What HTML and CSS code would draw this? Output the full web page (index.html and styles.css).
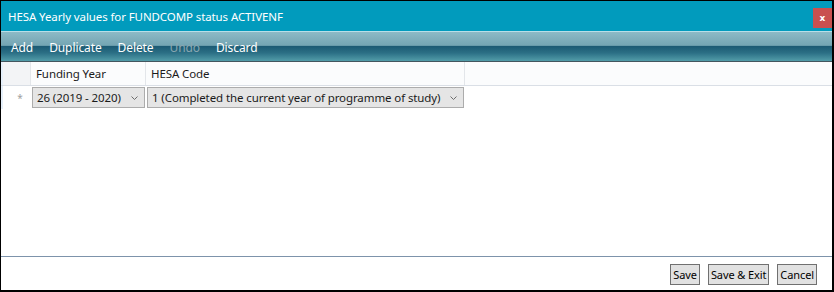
FILE: index.html
```html
<!DOCTYPE html>
<html lang="en">

<head>
    <meta charset="UTF-8">
    <meta name="viewport" content="width=device-width, initial-scale=1.0">
    <title>HESA Yearly values</title>
    <link rel="stylesheet" href="styles.css">
</head>

<body>
<div class="window">
    <header class="titlebar">
        <span class="title">HESA Yearly values for FUNDCOMP status ACTIVENF</span>
        <button class="close">x</button>
    </header>

    <nav class="toolbar">
        <a href="#">Add</a>
        <a href="#">Duplicate</a>
        <a href="#">Delete</a>
        <a href="#" class="disabled">Undo</a>
        <a href="#">Discard</a>
    </nav>

    <div class="grid">
        <div class="grid-row grid-head">
            <div class="cell indicator"></div>
            <div class="cell col-year">Funding Year</div>
            <div class="cell col-code">HESA Code</div>
            <div class="cell filler"></div>
        </div>
        <div class="grid-row">
            <div class="cell indicator">*</div>
            <div class="cell col-year">
                <div class="combo">
                    <span>26 (2019 - 2020)</span>
                    <svg class="chevron" width="7" height="4" viewBox="0 0 7 4"><path d="M0.5 0.5 L3.5 3.5 L6.5 0.5" fill="none" stroke="#6d6d6d" stroke-width="1"/></svg>
                </div>
            </div>
            <div class="cell col-code">
                <div class="combo">
                    <span>1 (Completed the current year of programme of study)</span>
                    <svg class="chevron" width="7" height="4" viewBox="0 0 7 4"><path d="M0.5 0.5 L3.5 3.5 L6.5 0.5" fill="none" stroke="#6d6d6d" stroke-width="1"/></svg>
                </div>
            </div>
        </div>
    </div>

    <footer class="actions">
        <button>Save</button>
        <button>Save &amp; Exit</button>
        <button>Cancel</button>
    </footer>
</div>
</body>
</html>
```

FILE: styles.css
```css
body {
    margin: 0;
    padding: 0;
    font-family: 'Noto Sans', 'Open Sans', sans-serif;
    font-size: 11.5px;
    letter-spacing: -0.1px;
    color: #1b1b1b;
    white-space: nowrap;
}

.window {
    height: 292px;
    box-sizing: border-box;
    border-style: solid;
    border-color: black;
    border-width: 1px 2px 2px 1px;
    display: flex;
    flex-direction: column;
    background-color: white;
}

.titlebar {
    height: 30px;
    flex-shrink: 0;
    display: flex;
    align-items: center;
    justify-content: space-between;
    padding-left: 7px;
    background-color: #019bbd;
    color: white;
}

.close {
    align-self: flex-start;
    margin-top: 7px;
    width: 19px;
    height: 20px;
    padding: 0;
    border: none;
    background-color: #c9504f;
    color: white;
    font-family: 'DejaVu Sans', sans-serif;
    font-weight: bold;
    font-size: 9px;
    line-height: 18px;
}

.toolbar {
    height: 29px;
    flex-shrink: 0;
    display: flex;
    align-items: center;
    padding-left: 2px;
    border-top: 1px solid #b8dfe8;
    border-bottom: 1px solid #44565f;
    background: linear-gradient(to bottom, #8dbac6 0%, #74a5b3 46%, #1c5b74 50%, #2b6f85 72%, #529ca9 100%);
}

.toolbar a {
    padding: 1px 8px 0;
    color: white;
    text-decoration: none;
    font-size: 12px;
    letter-spacing: -0.1px;
}

.toolbar a.disabled {
    color: #8aa7b1;
}

.grid {
    flex: 1;
    background-color: white;
}

.grid-row {
    display: flex;
    height: 23px;
}

.grid-head {
    height: 23px;
    border-bottom: 1px solid #dadfe6;
    background-color: #fbfcfd;
}

.cell {
    box-sizing: border-box;
    display: flex;
    align-items: center;
}

.grid-head .cell {
    border-right: 1px solid #e3e6ea;
    padding-left: 5px;
}

.grid-head .indicator {
    background-color: #f3f4f6;
}

.grid-head .filler {
    flex: 1;
    border-right: none;
}

.indicator {
    width: 30px;
    justify-content: center;
    padding-left: 6px;
    color: #a0a0a0;
    font-size: 10px;
    border-left: 2px solid #e6f0fa;
}

.col-year {
    width: 115px;
}

.col-code {
    width: 319px;
}

.grid-row .combo {
    box-sizing: border-box;
    height: 21px;
    width: 100%;
    margin: 0 1px;
    display: flex;
    align-items: center;
    justify-content: space-between;
    padding: 0 6px 0 4px;
    background-color: #e5e5e5;
    border: 1px solid #acacac;
}

.actions {
    height: 34px;
    box-sizing: border-box;
    flex-shrink: 0;
    display: flex;
    justify-content: flex-end;
    align-items: flex-start;
    gap: 8px;
    padding: 7px 15px 0 0;
    border-top: 1px solid #7d93ab;
}

.actions button {
    height: 21px;
    padding: 0 2px;
    font-family: 'Noto Sans', 'Open Sans', sans-serif;
    font-size: 11px;
    letter-spacing: -0.1px;
    color: black;
    background-color: #e1e1e1;
    border: 1px solid #707070;
}
```
